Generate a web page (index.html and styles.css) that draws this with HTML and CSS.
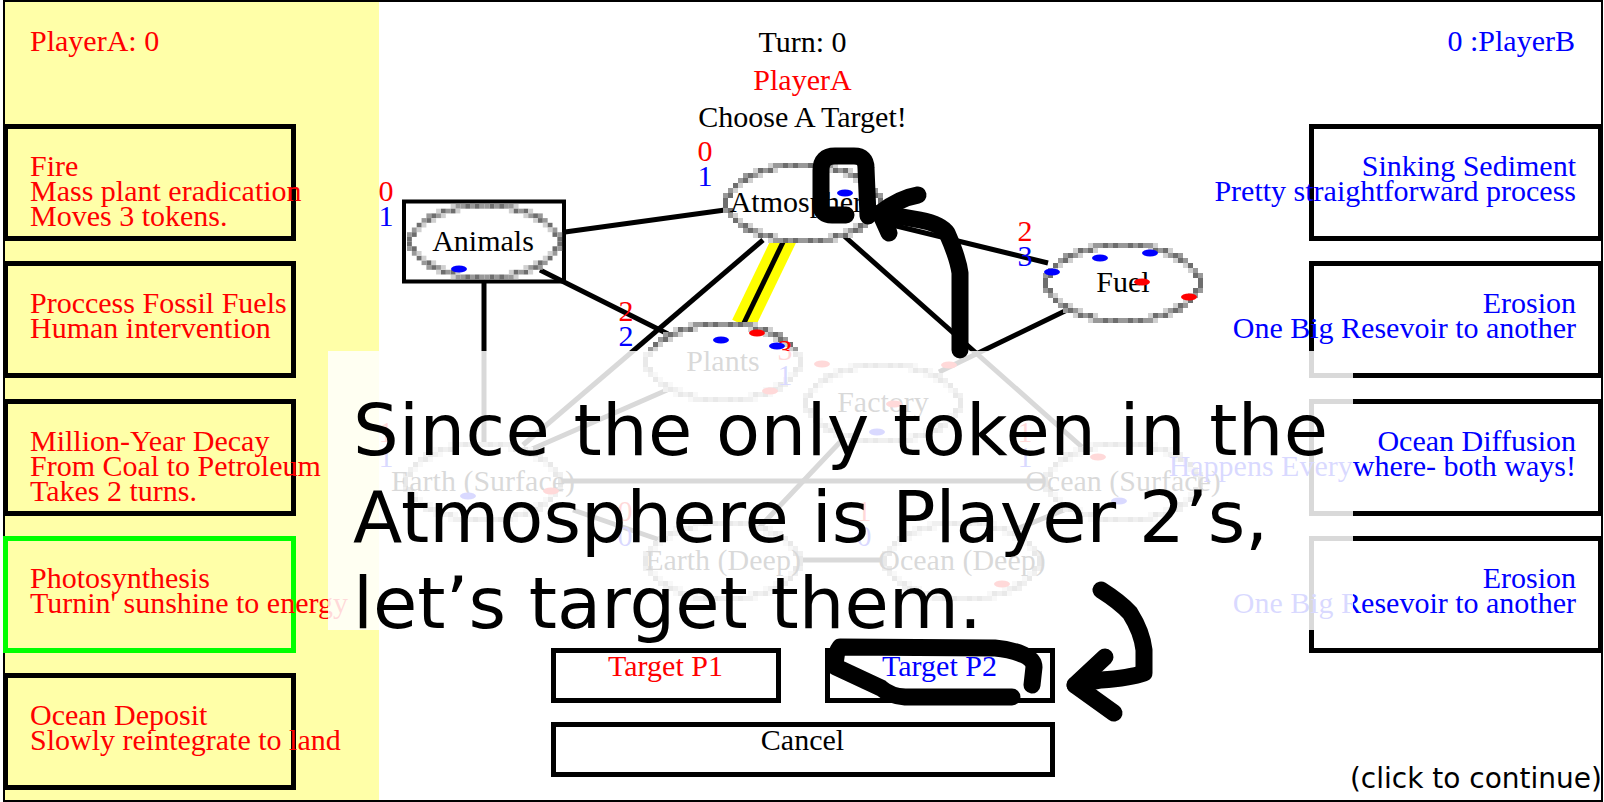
FILE: index.html
```html
<!DOCTYPE html>
<html lang="en">
<head>
<meta charset="utf-8">
<title>Carbon Cycle Game</title>
<link rel="stylesheet" href="styles.css">
</head>
<body>
<div class="stage">
  <svg class="layer diagram" viewBox="0 0 1604 802" width="1604" height="802">
    <defs>
      <g id="quad">
        <rect class="pl" x="45" y="0" width="5" height="5"/>
        <rect class="pm" x="50" y="0" width="5" height="5"/>
        <rect class="pm" x="55" y="0" width="5" height="5"/>
        <rect class="pd" x="60" y="0" width="5" height="5"/>
        <rect class="pm" x="65" y="0" width="5" height="5"/>
        <rect class="pd" x="70" y="0" width="5" height="5"/>
        <rect class="pm" x="75" y="0" width="5" height="5"/>
        <rect class="pl" x="50" y="5" width="5" height="5"/>
        <rect class="pd" x="45" y="5" width="5" height="5"/>
        <rect class="pm" x="40" y="5" width="5" height="5"/>
        <rect class="pd" x="35" y="5" width="5" height="5"/>
        <rect class="pl" x="30" y="5" width="5" height="5"/>
        <rect class="pl" x="35" y="10" width="5" height="5"/>
        <rect class="pm" x="30" y="10" width="5" height="5"/>
        <rect class="pd" x="25" y="10" width="5" height="5"/>
        <rect class="pm" x="20" y="10" width="5" height="5"/>
        <rect class="pl" x="25" y="15" width="5" height="5"/>
        <rect class="pd" x="20" y="15" width="5" height="5"/>
        <rect class="pm" x="15" y="15" width="5" height="5"/>
        <rect class="pl" x="15" y="20" width="5" height="5"/>
        <rect class="pd" x="10" y="20" width="5" height="5"/>
        <rect class="pl" x="10" y="25" width="5" height="5"/>
        <rect class="pm" x="5" y="25" width="5" height="5"/>
        <rect class="pd" x="5" y="30" width="5" height="5"/>
        <rect class="pm" x="0" y="30" width="5" height="5"/>
        <rect class="pd" x="0" y="35" width="5" height="5"/>
      </g>
      <g id="ring">
        <ellipse class="hole" cx="80" cy="40" rx="78" ry="38"/>
        <use href="#quad"/>
        <use href="#quad" transform="matrix(-1 0 0 1 160 0)"/>
        <use href="#quad" transform="matrix(1 0 0 -1 0 80)"/>
        <use href="#quad" transform="matrix(-1 0 0 -1 160 80)"/>
      </g>
    </defs>

    <rect class="box" x="404" y="201.5" width="160" height="80"/>

    <line class="glow" x1="785" y1="238" x2="743" y2="325"/>
    <line class="edge" x1="785" y1="238" x2="743" y2="325"/>
    <line class="edge" x1="565" y1="232" x2="725" y2="210"/>
    <line class="edge" x1="540" y1="270" x2="668" y2="334"/>
    <line class="edge" x1="484" y1="283" x2="484" y2="446"/>
    <line class="edge" x1="763" y1="240" x2="523" y2="445"/>
    <line class="edge" x1="843" y1="235" x2="1082" y2="447"/>
    <line class="edge" x1="1048" y1="263" x2="880" y2="222"/>
    <line class="edge" x1="1067" y1="310" x2="939" y2="372"/>
    <line class="edge" x1="667" y1="390" x2="523" y2="453"/>
    <line class="edge" x1="563" y1="481" x2="1043" y2="481"/>
    <line class="edge" x1="573" y1="510" x2="660" y2="540"/>
    <line class="edge" x1="803" y1="560" x2="883" y2="560"/>
    <line class="edge" x1="1014" y1="530" x2="1064" y2="510"/>
    <line class="edge" x1="842" y1="440" x2="757" y2="530"/>

    <g transform="translate(403 202)">
      <use href="#ring" transform="translate(4 2) scale(.97 .94)"/>
      <text class="label" x="80" y="49">Animals</text>
      <text class="count red-fill" x="-17" y="-1">0</text>
      <text class="count blue-fill" x="-17" y="24">1</text>
    </g>
    <g transform="translate(723 163)">
      <use href="#ring"/>
      <text class="label" x="80" y="49">Atmosphere</text>
      <text class="count red-fill" x="-18" y="-2">0</text>
      <text class="count blue-fill" x="-18" y="23">1</text>
    </g>
    <g transform="translate(1043 243)">
      <use href="#ring"/>
      <text class="label" x="80" y="49">Fuel</text>
      <text class="count red-fill" x="-18" y="-2">2</text>
      <text class="count blue-fill" x="-18" y="23">3</text>
    </g>
    <g transform="translate(643 322)">
      <use href="#ring"/>
      <text class="label" x="80" y="49">Plants</text>
      <text class="count red-fill" x="-17" y="-1">2</text>
      <text class="count blue-fill" x="-17" y="24">2</text>
    </g>
    <g transform="translate(803 363)">
      <use href="#ring"/>
      <text class="label" x="80" y="49">Factory</text>
      <text class="count red-fill" x="-18" y="-3">3</text>
      <text class="count blue-fill" x="-18" y="22">1</text>
    </g>
    <g transform="translate(403 442)">
      <use href="#ring"/>
      <text class="label" x="80" y="49">Earth (Surface)</text>
      <text class="count red-fill" x="-17" y="0">1</text>
      <text class="count blue-fill" x="-17" y="25">1</text>
    </g>
    <g transform="translate(1043 442)">
      <use href="#ring"/>
      <text class="label" x="80" y="49">Ocean (Surface)</text>
      <text class="count red-fill" x="-18" y="0">1</text>
      <text class="count blue-fill" x="-18" y="25">1</text>
    </g>
    <g transform="translate(643 521)">
      <use href="#ring"/>
      <text class="label" x="80" y="49">Earth (Deep)</text>
      <text class="count red-fill" x="-18" y="0">0</text>
      <text class="count blue-fill" x="-18" y="25">0</text>
    </g>
    <g transform="translate(882 521)">
      <use href="#ring"/>
      <text class="label" x="80" y="49">Ocean (Deep)</text>
      <text class="count red-fill" x="-18" y="0">1</text>
      <text class="count blue-fill" x="-18" y="25">0</text>
    </g>

    <ellipse class="tok blue-fill" cx="459" cy="269" rx="8" ry="3.5"/>
    <ellipse class="tok blue-fill" cx="845" cy="193" rx="8" ry="3.5"/>
    <ellipse class="tok blue-fill" cx="721" cy="340" rx="8" ry="3.5"/>
    <ellipse class="tok red-fill" cx="757" cy="333" rx="8" ry="3.5"/>
    <ellipse class="tok blue-fill" cx="777" cy="346" rx="8" ry="3.5"/>
    <ellipse class="tok red-fill" cx="770" cy="391" rx="8" ry="3.5"/>
    <ellipse class="tok blue-fill" cx="1100" cy="258" rx="8" ry="3.5"/>
    <ellipse class="tok blue-fill" cx="1150" cy="253" rx="8" ry="3.5"/>
    <ellipse class="tok blue-fill" cx="1052" cy="272" rx="8" ry="3.5"/>
    <ellipse class="tok red-fill" cx="1142" cy="282" rx="8" ry="3.5"/>
    <ellipse class="tok red-fill" cx="1189" cy="297" rx="8" ry="3.5"/>
    <ellipse class="tok red-fill" cx="822" cy="364" rx="8" ry="3.5"/>
    <ellipse class="tok red-fill" cx="949" cy="365" rx="8" ry="3.5"/>
    <ellipse class="tok red-fill" cx="894" cy="404" rx="8" ry="3.5"/>
    <ellipse class="tok blue-fill" cx="877" cy="432" rx="8" ry="3.5"/>
    <ellipse class="tok blue-fill" cx="468" cy="496" rx="8" ry="3.5"/>
    <ellipse class="tok red-fill" cx="551" cy="491" rx="8" ry="3.5"/>
    <ellipse class="tok red-fill" cx="1098" cy="457" rx="8" ry="3.5"/>
    <ellipse class="tok blue-fill" cx="1119" cy="501" rx="8" ry="3.5"/>
    <ellipse class="tok red-fill" cx="1002" cy="584" rx="8" ry="3.5"/>
  </svg>

  <div class="frame">
    <section class="side side-a">
      <div class="score">PlayerA: 0</div>
      <div class="card"><div>Fire</div><div>Mass plant eradication</div><div>Moves 3 tokens.</div></div>
      <div class="card"><div>Proccess Fossil Fuels</div><div>Human intervention</div></div>
      <div class="card"><div>Million-Year Decay</div><div>From Coal to Petroleum</div><div>Takes 2 turns.</div></div>
      <div class="card card-on"><div>Photosynthesis</div><div>Turnin' sunshine to energy</div></div>
      <div class="card"><div>Ocean Deposit</div><div>Slowly reintegrate to land</div></div>
    </section>
    <section class="center">
      <div class="status">
        <div>Turn: 0</div>
        <div class="red">PlayerA</div>
        <div>Choose A Target!</div>
      </div>
      <div class="actions">
        <div class="btn red">Target P1</div>
        <div class="btn blue">Target P2</div>
        <div class="btn btn-wide">Cancel</div>
      </div>
    </section>
    <section class="side side-b">
      <div class="score">0 :PlayerB</div>
      <div class="card"><div>Sinking Sediment</div><div>Pretty straightforward process</div></div>
      <div class="card"><div>Erosion</div><div>One Big Resevoir to another</div></div>
      <div class="card"><div>Ocean Diffusion</div><div>Happens Everywhere- both ways!</div></div>
      <div class="card"><div>Erosion</div><div>One Big Resevoir to another</div></div>
    </section>
  </div>

  <div class="veil">Since the only token in the<br>Atmosphere is Player 2’s,<br>let’s target them.</div>

  <svg class="layer ink" viewBox="0 0 1604 802" width="1604" height="802">
    <path d="M868 216 L866 168 Q866 156 854 156 L835 156 Q821 156 821 170 L821 205 Q821 215 832 215 L846 215"/>
    <path d="M960 350 L960 273 Q958 258 947 233 Q941 224 920 220 L880 213"/>
    <path d="M918 195 Q900 198 880 213 L889 233"/>
    <path d="M1032 685 L1034 667 Q1034 660 1024 655 Q1010 649 995 648 L840 647 Q834 655 836 667 L881 688 Q890 696 905 697 L1012 697"/>
    <path d="M1101 590 Q1120 602 1130 613 Q1142 632 1144 650 L1144 673 Q1130 678 1101 680 L1075 685"/>
    <path d="M1105 657 L1075 685 L1114 713"/>
  </svg>

  <div class="hint">(click to continue)</div>
</div>
</body>
</html>
```

FILE: styles.css
```css
html, body {
  margin: 0;
  padding: 0;
  overflow: hidden;
  background: #fff;
}

.stage {
  position: relative;
  width: 1604px;
  height: 802px;
  overflow: hidden;
  background: linear-gradient(to right, #fff 3px, #ffffa8 3px, #ffffa8 379px, #fff 379px);
  font-family: "Liberation Serif", "Times New Roman", serif;
  font-size: 30px;
  line-height: 25px;
  color: #000;
}

.frame {
  position: relative;
  box-sizing: border-box;
  width: 1600px;
  height: 802px;
  margin-left: 3px;
  border: 2px solid #000;
  display: grid;
  grid-template-columns: 291px 1fr 292px;
}

.side {
  display: flex;
  flex-direction: column;
  gap: 20.25px;
  min-width: 0;
}

.side-a {
  margin-left: -2px;
  color: #f00;
}

.side-b {
  margin-right: -2px;
  color: #00f;
  align-items: flex-end;
}

.score {
  box-sizing: border-box;
  height: 101.75px;
  padding-top: 26px;
  white-space: nowrap;
}

.side-a .score { padding-left: 27px; }
.side-b .score { padding-right: 28px; }

.card {
  box-sizing: border-box;
  width: 293px;
  height: 117px;
  flex: none;
  border: 5px solid #000;
  padding: 24px 22px 0;
  display: flex;
  flex-direction: column;
  white-space: nowrap;
}

.side-b .card {
  width: 294px;
  align-items: flex-end;
}

.card-on { border-color: #0f0; }

.center {
  display: flex;
  flex-direction: column;
  justify-content: space-between;
  align-items: center;
  padding: 21px 0 23px;
  min-width: 0;
}

.status {
  line-height: 37.5px;
  text-align: center;
  white-space: nowrap;
}

.actions {
  width: 504px;
  display: grid;
  grid-template-columns: 230px 230px;
  justify-content: space-between;
  row-gap: 19px;
}

.btn {
  box-sizing: border-box;
  height: 55px;
  border: 5px solid #000;
  text-align: center;
  white-space: nowrap;
}

.btn-wide { grid-column: 1 / -1; }

.red { color: #f00; }
.blue { color: #00f; }

.layer {
  position: absolute;
  left: 0;
  top: 0;
}

.diagram text {
  font-family: "Liberation Serif", "Times New Roman", serif;
  font-size: 30px;
}

.label { text-anchor: middle; fill: #000; }
.count { text-anchor: middle; }
.red-fill { fill: #f00; }
.blue-fill { fill: #00f; }

.hole { fill: #fff; }
.pd { fill: #6e6e6e; }
.pm { fill: #999; }
.pl { fill: #d0d0d0; }

.box {
  fill: #fff;
  stroke: #000;
  stroke-width: 4;
}

.edge {
  stroke: #000;
  stroke-width: 5;
}

.glow {
  stroke: #ff0;
  stroke-width: 24;
}

.veil {
  position: absolute;
  left: 328px;
  top: 351px;
  box-sizing: border-box;
  width: 1025px;
  height: 279px;
  padding: 36px 0 0 25px;
  background: rgba(255, 255, 255, 0.85);
  font-family: "DejaVu Sans", Verdana, sans-serif;
  font-size: 72px;
  line-height: 86.5px;
  white-space: nowrap;
}

.veil::first-line {
  letter-spacing: 0.38px;
}

.ink path {
  fill: none;
  stroke: #000;
  stroke-width: 17;
  stroke-linecap: round;
  stroke-linejoin: round;
}

.hint {
  position: absolute;
  right: 2px;
  bottom: 6px;
  font-family: "DejaVu Sans", Verdana, sans-serif;
  font-size: 28px;
  line-height: 34px;
  white-space: nowrap;
}
```
